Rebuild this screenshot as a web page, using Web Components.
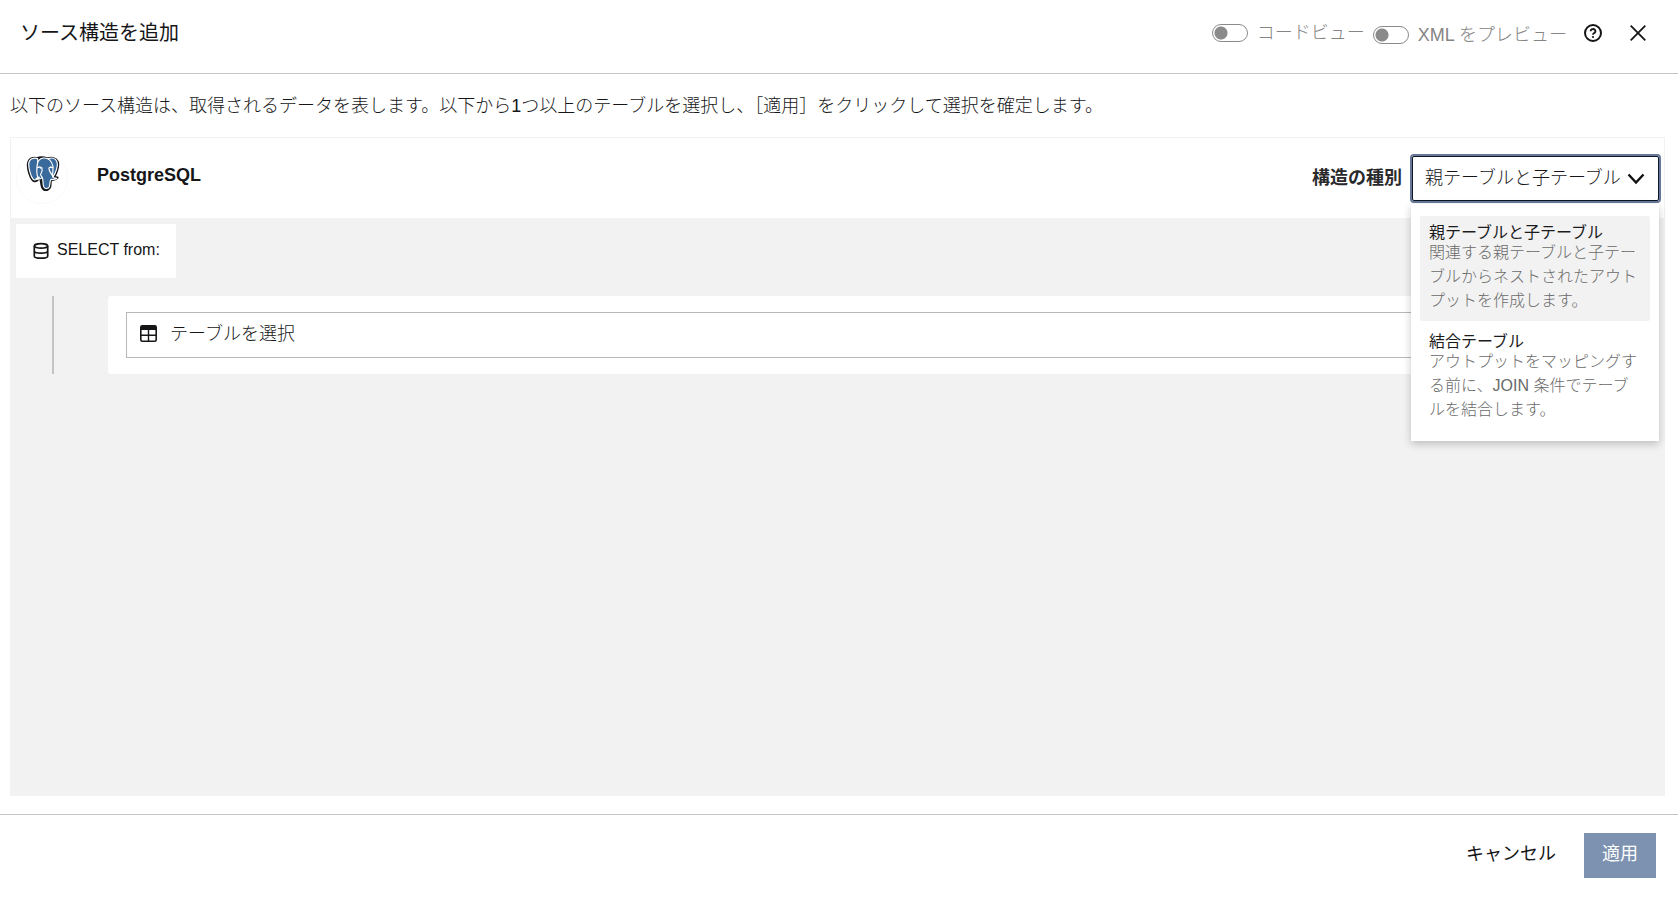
<!DOCTYPE html>
<html lang="ja">
<head>
<meta charset="utf-8">
<title>ソース構造を追加</title>
<style>
  html, body {
    height: 100%;
    margin: 0;
  }
  body {
    background: #fff;
    color: #161618;
    font: 300 18px/24px "Liberation Sans", "Noto Sans CJK JP", sans-serif;
  }
</style>
</head>
<body>

<source-dialog heading="ソース構造を追加">
  <view-toggle slot="tools">コードビュー</view-toggle>
  <view-toggle slot="tools" class="low">XML をプレビュー</view-toggle>
  <span slot="intro">以下のソース構造は、取得されるデータを表します。以下から1つ以上のテーブルを選択し、［適用］をクリックして選択を確定します。</span>
  <source-panel name="PostgreSQL">
    <postgres-logo slot="logo"></postgres-logo>
    <structure-select slot="type" label="構造の種別">
      <structure-option selected heading="親テーブルと子テーブル">関連する親テーブルと子テーブルからネストされたアウトプットを作成します。</structure-option>
      <structure-option heading="結合テーブル">アウトプットをマッピングする前に、JOIN 条件でテーブルを結合します。</structure-option>
    </structure-select>
    <query-root>SELECT from:</query-root>
    <table-picker placeholder="テーブルを選択"></table-picker>
  </source-panel>
</source-dialog>

<script>
class SourceDialog extends HTMLElement {
  connectedCallback() {
    this.attachShadow({ mode: "open" });
    this.shadowRoot.innerHTML = `
      <style>
        :host {
          display: flex;
          flex-direction: column;
          min-height: 100vh;
        }
        header {
          display: flex;
          align-items: center;
          justify-content: space-between;
          box-sizing: border-box;
          height: 74px;
          padding: 0 24px 7px 20px;
          border-bottom: 1px solid #c4c4c4;
        }
        h1 {
          margin: 0;
          font-size: 20px;
          line-height: 24px;
          font-weight: 400;
        }
        .tools {
          display: flex;
          align-items: center;
          gap: 8px;
        }
        ::slotted(.low) {
          padding-top: 4px;
        }
        .icon {
          display: flex;
          padding: 8px;
          border: 0;
          background: none;
          color: inherit;
        }
        .help { margin: 0 3px 0 0; }
        main {
          display: flex;
          flex: 1;
          flex-direction: column;
          gap: 19px;
          padding: 20px 13px 18px 10px;
        }
        p { margin: 0; }
        ::slotted(source-panel) { flex: 1; }
        footer {
          display: flex;
          align-items: center;
          justify-content: flex-end;
          gap: 10px;
          box-sizing: border-box;
          height: 91px;
          padding: 0 22px 9px;
          border-top: 1px solid #c4c4c4;
        }
        footer button {
          height: 45px;
          padding: 0 17px 4px;
          border: 1px solid transparent;
          background: none;
          color: inherit;
          font: inherit;
          font-weight: 400;
        }
        footer .apply {
          background: #7d92b0;
          color: #fff;
        }
      </style>
      <header>
        <h1>${this.getAttribute("heading")}</h1>
        <div class="tools">
          <slot name="tools"></slot>
          <button class="icon help" aria-label="ヘルプ">
            <svg width="20" height="20" viewBox="0 0 20 20" fill="none" stroke="currentColor" stroke-width="2">
              <circle cx="10" cy="10" r="8"/>
              <path d="M7.6 8.2a2.4 2.2 0 1 1 3.6 1.9c-.8.5-1.2.8-1.2 1.7" stroke-width="1.8"/>
              <circle cx="10" cy="14" r="1.1" fill="currentColor" stroke="none"/>
            </svg>
          </button>
          <button class="icon" aria-label="閉じる">
            <svg width="16" height="16" viewBox="0 0 16 16" stroke="currentColor" stroke-width="1.8">
              <path d="M.7.7l14.6 14.6M15.3.7L.7 15.3"/>
            </svg>
          </button>
        </div>
      </header>
      <main>
        <p><slot name="intro"></slot></p>
        <slot></slot>
      </main>
      <footer>
        <button>キャンセル</button>
        <button class="apply">適用</button>
      </footer>
    `;
  }
}

class ViewToggle extends HTMLElement {
  connectedCallback() {
    this.attachShadow({ mode: "open" });
    this.shadowRoot.innerHTML = `
      <style>
        :host {
          display: block;
          color: #858585;
        }
        label {
          display: flex;
          align-items: center;
          gap: 9px;
        }
        input {
          appearance: none;
          box-sizing: border-box;
          width: 36px;
          height: 18px;
          margin: 0;
          border: 1px solid #8a8a8a;
          border-radius: 9px;
          background: radial-gradient(circle at 8px 8px, #8a8a8a 6px, transparent 7px);
        }
      </style>
      <label><input type="checkbox" role="switch"><slot></slot></label>
    `;
  }
}

class SourcePanel extends HTMLElement {
  connectedCallback() {
    this.attachShadow({ mode: "open" });
    this.shadowRoot.innerHTML = `
      <style>
        :host {
          display: flex;
          flex-direction: column;
          border: 1px solid #f2f2f2;
        }
        .head {
          display: flex;
          align-items: center;
          box-sizing: border-box;
          height: 80px;
          padding: 0 3px 0 5px;
          gap: 29px;
        }
        h2 {
          flex: 1;
          margin: 0;
          padding-bottom: 6px;
          font-size: 18px;
          line-height: 24px;
        }
        .body {
          display: flex;
          flex: 1;
          flex-direction: column;
          align-items: flex-start;
          gap: 18px;
          padding: 6px 5px;
          background: #f2f2f2;
        }
        ::slotted(table-picker) { align-self: stretch; }
      </style>
      <div class="head">
        <slot name="logo"></slot>
        <h2>${this.getAttribute("name")}</h2>
        <slot name="type"></slot>
      </div>
      <div class="body"><slot></slot></div>
    `;
  }
}

class PostgresLogo extends HTMLElement {
  connectedCallback() {
    this.attachShadow({ mode: "open" });
    this.shadowRoot.innerHTML = `
      <style>
        :host {
          display: flex;
          justify-content: center;
          box-sizing: border-box;
          width: 52px;
          height: 52px;
          padding: 3px 0 0 1px;
          border: 1px solid #fafafa;
          border-radius: 50%;
        }
      </style>
      <svg width="34" height="36" viewBox="0 0 102 108" stroke-linejoin="round" stroke-linecap="round">
        <!-- outline, then the ears, head and trunk on top -->
        <g fill="#15181c" stroke="#15181c" stroke-width="7">
          <path d="M33 7C22 4 8 6 6 24c-1 14 6 39 14 48 5 6 11 4 17-3l5-2c5 4 2 27 11 33 8 4 17 1 19-7 2-9 1-16 3-22 8 1 15-2 19-6-4-1-8 0-10-2C92 52 99 28 95 17 89 5 74 4 64 8 54 4 42 3 33 7z"/>
        </g>
        <g fill="#3a6a9b" stroke="#fff" stroke-width="3.5">
          <path d="M35 8C22 4 9 8 8 24c0 13 6 37 13 45 5 6 10 2 15-5 2-8 0-18 0-28z"/>
          <path d="M66 8c10-4 22-2 27 9 4 11-3 33-12 46z"/>
          <path d="M36 64c-5-8-4-20-3-32C34 16 38 7 52 6c16-1 25 8 29 25 1 10-2 21-1 32 2 4 8 3 12 4-4 4-10 4-17 3-4 7-3 14-5 22-2 7-14 8-17 0-3-8-1-20-4-27-5 4-14 5-19 3 4-2 8-1 10-4z"/>
          <path d="M34 35c6-3 12-3 14 1 2 7-1 14-4 19-1 5 5 7 5 11M80 35c-6-3-9-3-11 1-1 8 6 16 11 24" fill="none"/>
        </g>
        <path d="M40 35c2-2 5-1 7 0-1 4-4 4-7 0zM71 34c2-1 5-1 7 0-1 4-5 3-7 0z" fill="#fff"/>
      </svg>
    `;
  }
}

class StructureSelect extends HTMLElement {
  connectedCallback() {
    this.attachShadow({ mode: "open" });
    const options = Array.from(this.children)
      .map((o) => `<option>${o.getAttribute("heading")}</option>`)
      .join("");
    this.shadowRoot.innerHTML = `
      <style>
        :host {
          display: flex;
          align-items: center;
          gap: 8px;
        }
        label {
          color: #2a2a2c;
          font-weight: bold;
        }
        .field {
          position: relative;
          display: grid;
          align-items: center;
          width: 251px;
        }
        select {
          grid-area: 1 / 1;
          appearance: none;
          height: 49px;
          padding: 0 34px 1px 13px;
          border: 2px solid #66779a;
          border-radius: 4px;
          outline: 1px solid #0d1622;
          outline-offset: -3px;
          background: #fff;
          color: inherit;
          font: inherit;
        }
        svg {
          grid-area: 1 / 1;
          justify-self: end;
          margin: 1px 16px 0 0;
          pointer-events: none;
        }
        .menu {
          position: absolute;
          z-index: 1;
          top: 50px;
          left: 1px;
          right: 2px;
          display: flex;
          flex-direction: column;
          gap: 4px;
          padding: 12px 9px 11px;
          background: #fff;
          box-shadow: 0 3px 8px rgba(0, 0, 0, .22);
        }
      </style>
      <label for="type">${this.getAttribute("label")}</label>
      <div class="field">
        <select id="type">${options}</select>
        <svg width="18" height="12" viewBox="0 0 18 12" fill="none" stroke="#111" stroke-width="2.4">
          <path d="M1.5 1.5L9 9.5l7.5-8"/>
        </svg>
        <div class="menu" role="listbox"><slot></slot></div>
      </div>
    `;
  }
}

class StructureOption extends HTMLElement {
  connectedCallback() {
    this.attachShadow({ mode: "open" });
    this.setAttribute("role", "option");
    this.shadowRoot.innerHTML = `
      <style>
        :host {
          display: block;
          padding: 8px 9px;
          border-radius: 2px;
          color: #6a6a6a;
          font-size: 16px;
          line-height: 24px;
        }
        :host([selected]) { background: #f2f2f2; }
        .heading {
          color: #1c1c1e;
          font-weight: 400;
          line-height: 17px;
        }
      </style>
      <div class="heading">${this.getAttribute("heading")}</div>
      <slot></slot>
    `;
  }
}

class QueryRoot extends HTMLElement {
  connectedCallback() {
    this.attachShadow({ mode: "open" });
    this.shadowRoot.innerHTML = `
      <style>
        :host {
          display: flex;
          align-items: center;
          gap: 7px;
          box-sizing: border-box;
          height: 54px;
          padding: 0 16px;
          background: #fff;
          font-size: 16px;
        }
        span { padding-bottom: 2px; }
      </style>
      <svg width="18" height="18" viewBox="0 0 18 18" fill="none" stroke="currentColor" stroke-width="1.7">
        <ellipse cx="9" cy="3.9" rx="6.7" ry="2.2"/>
        <path d="M2.3 3.9v10c0 1.3 3 2.3 6.7 2.3s6.7-1 6.7-2.300v-10M2.300 9c0 1.300 3 2.200 6.700 2.200s6.700-.9 6.700-2.200"/>
      </svg>
      <span><slot></slot></span>
    `;
  }
}

class TablePicker extends HTMLElement {
  connectedCallback() {
    this.attachShadow({ mode: "open" });
    this.shadowRoot.innerHTML = `
      <style>
        :host {
          display: flex;
          gap: 54px;
          padding: 0 14px 0 36px;
        }
        .branch {
          width: 2px;
          background: #c4c4c4;
        }
        .card {
          flex: 1;
          padding: 16px 18px;
          border-radius: 3px;
          background: #fff;
        }
        .field {
          display: grid;
          align-items: center;
        }
        select {
          grid-area: 1 / 1;
          appearance: none;
          height: 46px;
          padding: 0 43px 3px;
          border: 1px solid #b8b8b8;
          border-radius: 0;
          background: #fff;
          color: inherit;
          font: inherit;
        }
        svg {
          grid-area: 1 / 1;
          margin: 0 0 3px 14px;
          pointer-events: none;
        }
      </style>
      <div class="branch"></div>
      <div class="card">
        <div class="field">
          <select aria-label="${this.getAttribute("placeholder")}">
            <option>${this.getAttribute("placeholder")}</option>
          </select>
          <svg width="17" height="17" viewBox="0 0 17 17">
            <rect x=".8" y=".8" width="15.4" height="15.4" rx="1.5" fill="none" stroke="currentColor" stroke-width="1.6"/>
            <path d="M1 1h15v4H1z" fill="currentColor"/>
            <path d="M8.5 5v11M1 10.3h15" stroke="currentColor" stroke-width="1.4"/>
          </svg>
        </div>
      </div>
    `;
  }
}

customElements.define("source-dialog", SourceDialog);
customElements.define("view-toggle", ViewToggle);
customElements.define("source-panel", SourcePanel);
customElements.define("postgres-logo", PostgresLogo);
customElements.define("structure-select", StructureSelect);
customElements.define("structure-option", StructureOption);
customElements.define("query-root", QueryRoot);
customElements.define("table-picker", TablePicker);
</script>
</body>
</html>
